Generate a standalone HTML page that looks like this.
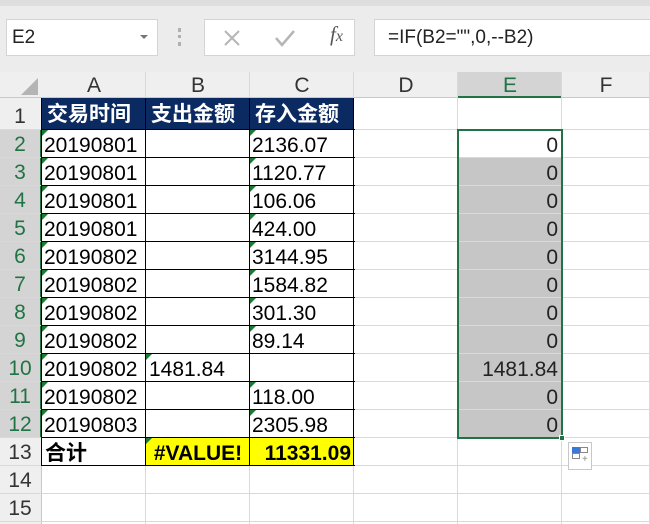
<!DOCTYPE html>
<html><head><meta charset="utf-8"><style>
body{margin:0;width:650px;height:524px;overflow:hidden;background:#fff;font-family:"Liberation Sans","Noto Sans CJK SC",sans-serif;position:relative}
.a{position:absolute;box-sizing:border-box}
.t{font-size:21px;line-height:28px;white-space:nowrap}
.tri{position:absolute;left:0;top:0;width:0;height:0;border-top:6px solid #1e7a32;border-right:6px solid transparent}
</style></head><body>
<div class="a" style="left:0;top:0;width:650px;height:72px;background:#ececec"></div>
<div class="a" style="left:0;top:0;width:650px;height:6px;background:#dedede"></div>
<div class="a" style="left:6px;top:19px;width:152px;height:37px;background:#fff;border:1px solid #d4d4d4"></div>
<div class="a t" style="left:12px;top:24px;font-size:19px;color:#222">E2</div>
<div class="a" style="left:140px;top:35px;border-left:4px solid transparent;border-right:4px solid transparent;border-top:4px solid #777"></div>
<div class="a" style="left:178px;top:28px;width:3px;height:18px;border-left:3px dotted #b0b0b0"></div>
<div class="a" style="left:204px;top:19px;width:151px;height:37px;background:#fff;border:1px solid #d4d4d4"></div>
<svg class="a" style="left:222px;top:28px" width="20" height="20"><path d="M3 3L17 17M17 3L3 17" stroke="#b5b5b5" stroke-width="2"/></svg>
<svg class="a" style="left:274px;top:28px" width="22" height="20"><path d="M2 10L8 17L20 3" stroke="#b5b5b5" stroke-width="2.5" fill="none"/></svg>
<div class="a" style="left:330px;top:22px;font-family:'Liberation Serif',serif;font-style:italic;font-size:21px;color:#555">f<span style="font-size:16px">x</span></div>
<div class="a" style="left:374px;top:19px;width:280px;height:37px;background:#fff;border:1px solid #d4d4d4"></div>
<div class="a t" style="left:388px;top:24px;font-size:19px;color:#222">=IF(B2="",0,--B2)</div>
<div class="a" style="left:0;top:72px;width:650px;height:26px;background:#efefef;border-bottom:1px solid #c8c8c8"></div>
<div class="a" style="left:458px;top:72px;width:104px;height:26px;background:#d4d4d4;border-bottom:2px solid #217346"></div>
<div class="a" style="left:0;top:98px;width:42px;height:426px;background:#efefef;border-right:1px solid #c8c8c8"></div>
<div class="a" style="left:0;top:130px;width:42px;height:308px;background:#d4d4d4;border-right:2px solid #217346"></div>
<svg class="a" style="left:18px;top:76px" width="22" height="20"><path d="M20 2L20 19L3 19Z" fill="#b4b4b4"/></svg>
<div id="g"></div>
<script>
var cols=[42,146,250,354,458,562,650],names="ABCDEF";
var rows=[98,130];for(var i=2;i<=15;i++)rows.push(rows[rows.length-1]+28);
var h='';
for(var c=0;c<6;c++){h+='<div class="a t" style="left:'+cols[c]+'px;top:72px;width:'+(cols[c+1]-cols[c])+'px;text-align:center;color:'+(c==4?'#217346':'#333')+'">'+names[c]+'</div>';
h+='<div class="a" style="left:'+(cols[c+1]-1)+'px;top:72px;width:1px;height:452px;background:#d9d9d9"></div>';}
for(var r=0;r<15;r++){h+='<div class="a" style="left:0;top:'+(rows[r+1]-1)+'px;width:650px;height:1px;background:#d9d9d9"></div>';
h+='<div class="a t" style="left:0;top:'+(rows[r+1]-27)+'px;width:40px;text-align:center;color:'+(r>=1&&r<=11?'#217346':'#333')+'">'+(r+1)+'</div>';}
h+='<div class="a" style="left:458px;top:158px;width:104px;height:280px;background:#c6c6c6"></div>';
for(var r=3;r<13;r++)h+='<div class="a" style="left:458px;top:'+(rows[r-1]-1)+'px;width:104px;height:1px;background:#d9d9d9"></div>';
h+='<div class="a" style="left:42px;top:98px;width:312px;height:32px;background:#0b2a62"></div>';
var hd=['交易时间','支出金额','存入金额'];
for(var c=0;c<3;c++)h+='<div class="a" style="left:'+(cols[c]+5)+'px;top:98px;font-size:21px;line-height:34px;font-weight:bold;color:#fff">'+hd[c]+'</div>';
var A=['20190801','20190801','20190801','20190801','20190802','20190802','20190802','20190802','20190802','20190802','20190803'];
var C=['2136.07','1120.77','106.06','424.00','3144.95','1584.82','301.30','89.14','','118.00','2305.98'];
var E=['0','0','0','0','0','0','0','0','1481.84','0','0'];
for(var i=0;i<11;i++){var y=rows[i+1];
h+='<div class="a t" style="left:44px;top:'+(y+2)+'px">'+A[i]+'</div><div class="a" style="left:42px;top:'+y+'px"><div class="tri"></div></div>';
if(C[i]){h+='<div class="a t" style="left:252px;top:'+(y+2)+'px">'+C[i]+'</div><div class="a" style="left:250px;top:'+y+'px"><div class="tri"></div></div>';}
h+='<div class="a t" style="left:458px;top:'+(y+2)+'px;width:100px;text-align:right;color:#222">'+E[i]+'</div>';}
h+='<div class="a t" style="left:149px;top:356px">1481.84</div><div class="a" style="left:146px;top:354px"><div class="tri"></div></div>';
h+='<div class="a" style="left:146px;top:438px;width:208px;height:28px;background:#ffff00"></div>';
h+='<div class="a t" style="left:45px;top:440px;font-weight:bold">合计</div>';
h+='<div class="a t" style="left:146px;top:440px;width:104px;text-align:center;font-weight:bold">#VALUE!</div><div class="a" style="left:146px;top:438px"><div class="tri"></div></div>';
h+='<div class="a t" style="left:250px;top:440px;width:101px;text-align:right;font-weight:bold">11331.09</div>';
for(var r=1;r<=13;r++)h+='<div class="a" style="left:42px;top:'+(rows[r]-1)+'px;width:313px;height:1px;background:#000"></div>';
for(var c=0;c<=3;c++)h+='<div class="a" style="left:'+(cols[c]-1)+'px;top:98px;width:1px;height:368px;background:#000"></div>';
h+='<div class="a" style="left:457px;top:129px;width:106px;height:310px;border:2px solid #217346"></div>';
h+='<div class="a" style="left:559px;top:435px;width:6px;height:6px;background:#217346;border:1px solid #fff"></div>';
h+='<div class="a" style="left:568px;top:442px;width:24px;height:28px;border:1px solid #c8c8c8;background:#fff"></div>';
h+='<div class="a" style="left:572px;top:447px;width:8px;height:6px;background:#3b78d8"></div><div class="a" style="left:580px;top:447px;width:8px;height:6px;border:1px solid #888"></div><div class="a" style="left:572px;top:453px;width:8px;height:6px;border:1px solid #888"></div>';
h+='<div class="a" style="left:582px;top:455px;font-size:10px;color:#888;line-height:10px">+</div>';
document.getElementById('g').innerHTML=h;
</script>
</body></html>
